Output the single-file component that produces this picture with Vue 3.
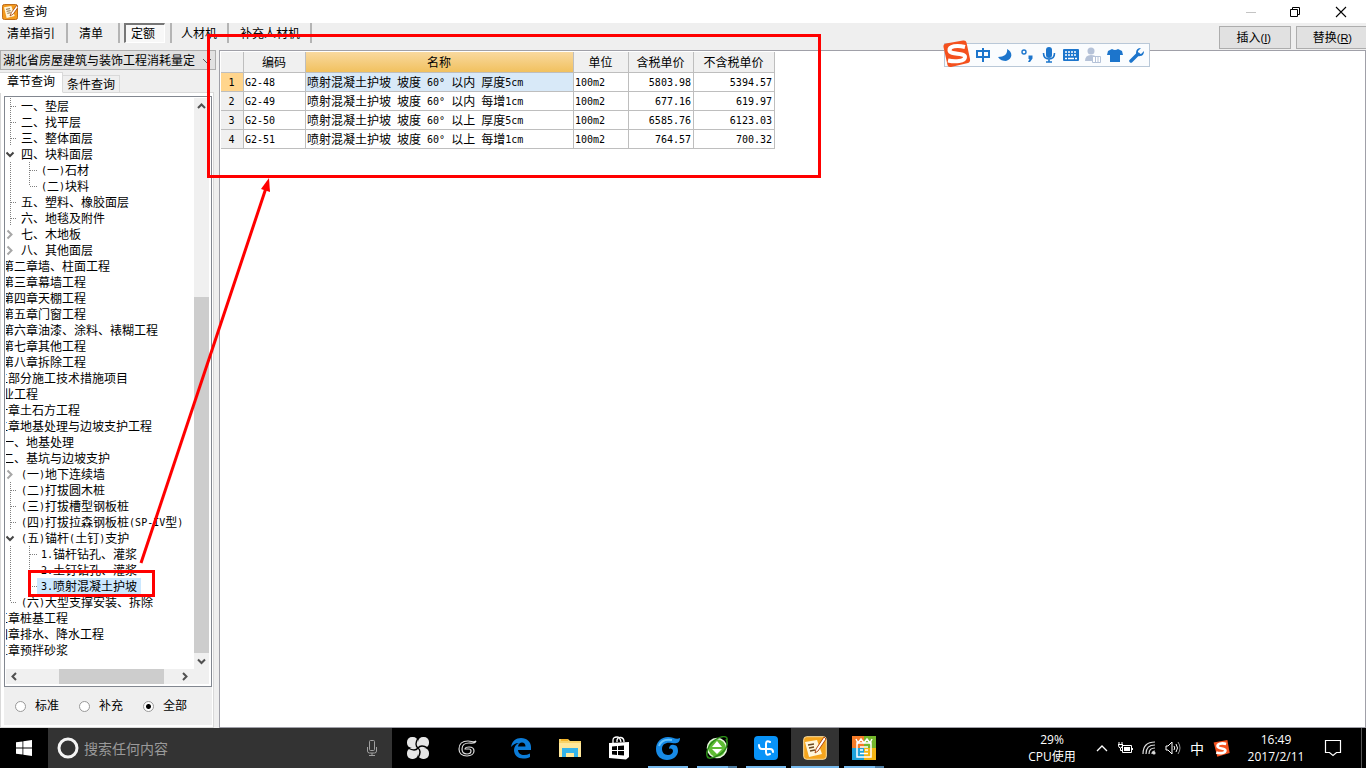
<script setup>
import { ref, h } from 'vue'

// Latin runs are set in a half-width face, so two of them fill one Chinese character.
const Mixed = (props) =>
  props.text
    .split(/([\x20-\x7e°]+)/)
    .filter(Boolean)
    .map((part) => (/^[\x20-\x7e°]/.test(part) ? h('span', { class: 'half' }, part) : part))
Mixed.props = ['text']

const modes = ['清单指引', '清单', '定额', '人材机', '补充人材机']
const activeMode = ref('定额')
const scope = ref('全部')
const selected = ref('3.喷射混凝土护坡')

const tree = [
  { t: '一、垫层', l: 'sec', a: 'mid' },
  { t: '二、找平层', l: 'sec', a: 'mid' },
  { t: '三、整体面层', l: 'sec', a: 'mid' },
  { t: '四、块料面层', l: 'sec', a: 'open' },
  { t: '(一)石材', l: 'sub', a: 'line', b: 'mid' },
  { t: '(二)块料', l: 'sub', a: 'line', b: 'end' },
  { t: '五、塑料、橡胶面层', l: 'sec', a: 'mid' },
  { t: '六、地毯及附件', l: 'sec', a: 'mid' },
  { t: '七、木地板', l: 'sec', a: 'shut' },
  { t: '八、其他面层', l: 'sec', a: 'shut' },
  { t: '第二章墙、柱面工程', l: 'chap' },
  { t: '第三章幕墙工程', l: 'chap' },
  { t: '第四章天棚工程', l: 'chap' },
  { t: '第五章门窗工程', l: 'chap' },
  { t: '第六章油漆、涂料、裱糊工程', l: 'chap' },
  { t: '第七章其他工程', l: 'chap' },
  { t: '第八章拆除工程', l: 'chap' },
  { t: '二部分施工技术措施项目', l: 'part' },
  { t: '业工程', l: 'chap' },
  { t: '一章土石方工程', l: 'part' },
  { t: '二章地基处理与边坡支护工程', l: 'part' },
  { t: '一、地基处理', l: 'chap' },
  { t: '二、基坑与边坡支护', l: 'chap' },
  { t: '(一)地下连续墙', l: 'sec', a: 'shut' },
  { t: '(二)打拔圆木桩', l: 'sec', a: 'mid' },
  { t: '(三)打拔槽型钢板桩', l: 'sec', a: 'mid' },
  { t: '(四)打拔拉森钢板桩(SP-IV型)', l: 'sec', a: 'mid' },
  { t: '(五)锚杆(土钉)支护', l: 'sec', a: 'open' },
  { t: '1.锚杆钻孔、灌浆', l: 'sub', a: 'line', b: 'mid' },
  { t: '2.土钉钻孔、灌浆', l: 'sub', a: 'line', b: 'mid' },
  { t: '3.喷射混凝土护坡', l: 'sub', a: 'line', b: 'end' },
  { t: '(六)大型支撑安装、拆除', l: 'sec', a: 'end' },
  { t: '三章桩基工程', l: 'part' },
  { t: '四章排水、降水工程', l: 'part' },
  { t: '五章预拌砂浆', l: 'part' },
]

const rows = [
  ['G2-48', '喷射混凝土护坡 坡度 60° 以内 厚度5cm', '100m2', '5803.98', '5394.57'],
  ['G2-49', '喷射混凝土护坡 坡度 60° 以内 每增1cm', '100m2', '677.16', '619.97'],
  ['G2-50', '喷射混凝土护坡 坡度 60° 以上 厚度5cm', '100m2', '6585.76', '6123.03'],
  ['G2-51', '喷射混凝土护坡 坡度 60° 以上 每增1cm', '100m2', '764.57', '700.32'],
]
</script>

<template>
  <div class="screen">
    <header class="title">
      <svg class="app-icon" width="16" height="16" viewBox="0 0 24 24">
        <rect x=".7" y=".7" width="22.6" height="22.6" rx="3" fill="#f39a1d" stroke="#b9620c" stroke-width="1.4" />
        <path d="M3 5l11-2 5 15-12 3z" fill="#fff6dc" />
        <path d="M6 8l6-1M7 11l6-1M8 14l5-1" stroke="#6b4a22" stroke-width="1.2" />
        <path d="M22 2l-8 11-2 5 5-3 7-10z" fill="#fff" stroke="#a5420a" stroke-width="1.2" />
      </svg>
      <h1>查询</h1>
      <div class="win-btns">
        <button aria-label="最小化"><svg width="12" height="12"><path d="M1 6.500h10" stroke="#c4c4c4" /></svg></button>
        <button aria-label="还原"><svg width="12" height="12" fill="none" stroke="#000"><path d="M1.500 3.500h7v7h-7zM3.500 3.500v-2h7v7h-2" /></svg></button>
        <button aria-label="关闭"><svg width="12" height="12" fill="none" stroke="#000" stroke-width="1.100"><path d="M1 1l10 10M11 1L1 11" /></svg></button>
      </div>
    </header>

    <nav class="modes">
      <div v-for="m in modes" :key="m" class="mode-cell">
        <button :class="{ on: m === activeMode }" @click="activeMode = m">{{ m }}</button>
      </div>
      <div class="actions">
        <button>插入<span class="key">(<u>I</u>)</span></button>
        <button>替换<span class="key">(<u>R</u>)</span></button>
      </div>
    </nav>

    <main>
      <aside>
        <div class="combo">
          <select aria-label="定额库"><option>湖北省房屋建筑与装饰工程消耗量定</option></select>
          <svg width="10" height="6" fill="none" stroke="#555"><path d="M1 1l4 4 4-4" /></svg>
        </div>
        <div class="tabs">
          <button class="on">章节查询</button>
          <button>条件查询</button>
        </div>
        <section class="page">
          <div class="treebox">
            <ul class="tree">
              <li v-for="n in tree" :key="n.t" :class="n.l">
                <svg v-if="n.a" :width="n.b ? 51 : 31" height="16" fill="none" stroke="#808080" stroke-dasharray="1 1">
                  <path v-if="n.a === 'mid' || n.a === 'line'" d="M24.500 0v16" />
                  <path v-if="n.a === 'end'" d="M24.500 0v8" />
                  <path v-if="n.a === 'mid' || n.a === 'end'" d="M25 8.500h8" />
                  <path v-if="n.a === 'open' || n.a === 'shut'" d="M32 8.500h1" />
                  <path v-if="n.a === 'open'" d="M20.500 6.500l3.500 3.500 3.500-3.500" stroke="#444" stroke-width="2" stroke-dasharray="none" />
                  <path v-if="n.a === 'shut'" d="M21.500 4.500l4 4-4 4" stroke="#a6a6a6" stroke-width="2" stroke-dasharray="none" />
                  <path v-if="n.b === 'mid'" d="M43.500 0v16" />
                  <path v-if="n.b === 'end'" d="M43.500 0v8" />
                  <path v-if="n.b" d="M44 8.500h7" />
                </svg>
                <button :class="{ sel: n.t === selected }" @click="selected = n.t"><Mixed :text="n.t" /></button>
              </li>
            </ul>
            <div class="vbar">
              <svg width="15" height="16" fill="none" stroke="#505050" stroke-width="2"><path d="M4 10l3.500-3.500L11 10" /></svg>
              <i class="before"></i><i class="thumb"></i>
              <svg width="15" height="16" fill="none" stroke="#505050" stroke-width="2"><path d="M4 6.500l3.500 3.500L11 6.500" /></svg>
            </div>
            <div class="hbar">
              <svg width="16" height="15" fill="none" stroke="#505050" stroke-width="2"><path d="M10 4L6.500 7.500 10 11" /></svg>
              <i class="before"></i><i class="thumb"></i><i class="after"></i>
              <svg width="16" height="15" fill="none" stroke="#505050" stroke-width="2"><path d="M5 4l3.500 3.500L5 11" /></svg>
            </div>
            <div class="corner"></div>
          </div>
          <div class="scopes">
            <label v-for="s in ['标准', '补充', '全部']" :key="s"><input v-model="scope" type="radio" name="scope" :value="s" />{{ s }}</label>
          </div>
        </section>
      </aside>

      <section class="grid">
        <table>
          <colgroup><col class="c0" /><col class="c1" /><col class="c2" /><col class="c3" /><col class="c4" /><col class="c5" /></colgroup>
          <thead>
            <tr><th></th><th>编码</th><th class="hot">名称</th><th>单位</th><th>含税单价</th><th>不含税单价</th></tr>
          </thead>
          <tbody>
            <tr v-for="(r, i) in rows" :key="r[0]" :class="{ cur: i === 0 }">
              <th scope="row"><Mixed :text="String(i + 1)" /></th>
              <td v-for="(c, j) in r" :key="j" :class="{ num: j > 2, name: j === 1 }"><Mixed :text="c" /></td>
            </tr>
          </tbody>
        </table>
      </section>
    </main>

    <footer class="taskbar">
      <button class="start" aria-label="开始">
        <svg width="16" height="16" fill="#fff"><path d="M0 2.300l6.500-.9v6.200H0zM7.300 1.300L16 0v7.600H7.300zM0 8.400h6.500v6.200L0 13.700zM7.300 8.400H16V16l-8.700-1.300z" /></svg>
      </button>
      <label class="search">
        <svg width="22" height="22" fill="none" stroke="#f4f4f4"><circle cx="11" cy="11" r="9" stroke-width="3" /></svg>
        <input type="text" placeholder="搜索任何内容" aria-label="搜索" />
        <svg width="12" height="18" fill="none" stroke="#a0a0a0"><rect x="3.500" y="1.500" width="5" height="10" rx="1" /><path d="M1.500 8v4q0 2 2 2h5q2 0 2-2V8M6 14v3M3 16.500h6" /></svg>
      </label>
      <div class="apps">
        <button aria-label="搜狗">
          <svg width="22" height="22">
            <g fill="#e6e6e6"><rect x="0" y="0" width="11" height="11" rx="5" /><rect x="11" y="0" width="11" height="11" rx="5" /><rect x="11" y="11" width="11" height="11" rx="5" /><rect x="0" y="11" width="11" height="11" rx="5" /><circle cx="11" cy="11" r="5" /></g>
            <path d="M11 11Q7 8 11 1M11 11Q14 7 21 11M11 11Q15 14 11 21M11 11Q8 15 1 11" fill="none" stroke="#000" stroke-width="1.400" />
          </svg>
        </button>
        <button aria-label="广联达">
          <svg width="20" height="20" fill="none" stroke="#e0e0e0" stroke-width="1.200"><path d="M19 3c-2 2-4 0-8 0C5 3 2 6 2 11c0 4 3 7 8 7 4 0 7-2 7-5s-2-4-5-4c-2 0-4 1-4 2h4c2 0 2 1 2 2 0 2-2 3-4 3-3 0-5-2-5-5 0-4 3-6 7-6 3 0 6 1 7-2z" /></svg>
        </button>
        <span class="gap"></span>
        <button aria-label="Edge">
          <svg width="22" height="22" viewBox="0 0 22 22" fill="#0c7cd8"><path d="M1 10C2 4 6 1 11 1c6 0 10 4 10 9v3H8c0 3 3 5 6 5 2 0 4-.5 6-1.500V20c-2 1-4 1.500-7 1.500C8 21.500 4 18 4 13c0-3 2-6 5-7-4 0-6 2-8 4zm7-.5h7.500C15.500 7 14 5.500 12 5.500S8.500 7 8 9.500z" /></svg>
        </button>
        <button aria-label="文件资源管理器">
          <svg width="22" height="20"><path d="M0 1h9l2 2h11v16H0z" fill="#f8d36a" /><path d="M2 1h7v2H2z" fill="#f4b42a" /><path d="M0 5h22v14H0z" fill="#ffe79b" /><path d="M3 19v-9h16v9h-4v-4H7v4z" fill="#34b3ea" /></svg>
        </button>
        <button aria-label="应用商店">
          <svg width="22" height="24"><path d="M1 7l20-1v15l-3 2.500L1 22z" fill="#fff" /><path d="M5 7V4q0-3 4-3 3 0 4 5M9 6V4q1-3 4-2.500 3 .5 3 4.500" fill="none" stroke="#fff" stroke-width="1.300" /><path d="M4 10.500l5-.4v4H4zM10 10l6-.5v4.600h-6zM4 15h5v4l-5-.4zM10 15h6v4.600l-6-.5z" fill="#000" /></svg>
        </button>
        <button class="run" aria-label="广联达助手">
          <svg width="24" height="24" fill="none">
            <path d="M24 2c0 5-4 6-8 5-6-1-10 1-10 6 0 3 2 6 6 6 3 0 5-2 5-4s-2-3-4-2c0-3 2-5 5-4 3 0 4 3 4 6 0 5-5 9-11 9C5 24 0 20 0 13 0 6 5 1 12 1c5 0 8 3 12 1z" fill="#178ae6" />
            <path d="M3 10c2-6 7-7 13-6" stroke="#66c2fb" stroke-width="2" />
          </svg>
        </button>
        <button class="run many" aria-label="浏览器">
          <svg width="24" height="24"><circle cx="12" cy="12" r="9.500" fill="#5fbc35" stroke="#e9f9df" stroke-width="1.600" /><path d="M12 5l5 6H7zM7 13h10l-5 5z" fill="#fff" /><path d="M3 22C0 18 3 9 10 4s13-4 12 0M21 3c3 5 0 12-7 16S2 23 3 20" fill="none" stroke="#2c8d18" stroke-width="1.500" /></svg>
        </button>
        <button class="run" aria-label="计价">
          <svg width="24" height="24"><rect width="24" height="24" rx="4" fill="#0893f8" /><path d="M16 6q-4-2-4 2v8q0 4 4 2M5 9q0 4 3 4h8q3 0 3 3" fill="none" stroke="#fff" stroke-width="2" stroke-linecap="round" /></svg>
        </button>
        <button class="run now" aria-label="查询">
          <svg width="24" height="24"><rect x=".7" y=".7" width="22.600" height="22.600" rx="3" fill="#f5a51e" stroke="#ffe0a0" /><path d="M2 6l12-2 5 14-13 3z" fill="#fff6dc" /><path d="M5 9l6-1M6 12l5-1M7 15l5-1" stroke="#6b4a22" stroke-width="1.400" /><path d="M21 1l-8 12-1 4 3-2 8-12z" fill="#fff" stroke="#b34a10" /></svg>
        </button>
        <button class="run many" aria-label="文档工具">
          <svg width="24" height="24"><path d="M0 0h12v12H0z" fill="#f57b28" /><path d="M12 0h12v12H12z" fill="#74b72c" /><path d="M0 12h12v12H0z" fill="#1ea3da" /><path d="M12 12h12v12H12z" fill="#f3b414" /><path d="M4 3l2 4 3-4 3 4 3-4 3 4 2-4M5 7v14h14V7z" fill="none" stroke="#fff" stroke-width="1.500" /><path d="M8 11h8M8 14h3M13 14h3M8 17.500h8" stroke="#fff" stroke-width="1.600" /></svg>
        </button>
      </div>
      <div class="cpu">29%<br />CPU使用</div>
      <div class="tray">
        <svg width="12" height="8" fill="none" stroke="#fff" stroke-width="1.300"><path d="M1 7l5-5 5 5" /></svg>
        <svg width="16" height="14" fill="none" stroke="#fff"><path d="M5.500 4.500h9v7h-9zM15.500 7v2M1 3.500h5M2 1v2M5 1v2M1.500 4q0 3 2 3t2-3M3.500 7v2.500H5" /><path d="M7 6h6v4H7z" fill="#fff" stroke="none" /></svg>
        <svg width="14" height="14" fill="none" stroke="#ddd" stroke-width="1.200"><path d="M1 13Q1 1 13 1M4 13q0-9 9-9M7 13q0-6 6-6M10 13q0-3 3-3" /><circle cx="12" cy="12" r="1" fill="#fff" /></svg>
        <svg width="16" height="14" fill="none" stroke="#fff"><path d="M1 5h2l4-4v12L3 9H1zM9 5q1.500 2 0 4M11 3q3 4 0 8" /><path d="M13 1q4 6 0 12" stroke="#999" /></svg>
        <span class="ime">中</span>
        <svg width="17" height="17" viewBox="0 0 26 26"><path d="M1 4l21-4 3.500 20-19 5.500z" fill="#f4511e" /><path d="M20 6C13 4 6 6 7 10s12 2 12 6-8 5-14 3" fill="none" stroke="#fff" stroke-width="4" /></svg>
      </div>
      <div class="clock">16:49<br />2017/2/11</div>
      <svg class="note" width="18" height="18" fill="none" stroke="#fff" stroke-width="1.200"><path d="M1.500 1.500h15v12h-4l-3.500 3-3.500-3h-4z" /></svg>
      <i class="peek"></i>
    </footer>

    <div class="sogou">
      <svg class="logo" width="28" height="28" viewBox="0 0 28 28"><path d="M3 3.500L20 .5q3-.5 3.500 2L27 19q.5 3-2 4L8 27q-3 .5-3.500-2L.5 7q-.500-3 2.500-3.500z" fill="#f4511e" /><path d="M22 7C14 5 6 6 6.500 10.500S22 12.500 22 17 12 22 5 20.500" fill="none" stroke="#fff" stroke-width="4" /></svg>
      <svg width="16" height="16" fill="none" stroke="#1c75cc" stroke-width="2"><path d="M2 4h12v6H2zM8 1v14" /></svg>
      <svg width="16" height="16" fill="#1c75cc"><path d="M10 2c1 5-3 8-9 8 2 3 5 4 8 4 7-2 7-9 1-12z" /></svg>
      <svg width="16" height="16" fill="#1c75cc"><circle cx="5" cy="5" r="2" fill="none" stroke="#1c75cc" stroke-width="1.400" /><path d="M9.500 8.500h4v3L11 15H9l1.500-3h-1z" /></svg>
      <svg width="16" height="16"><rect x="5" y="0" width="6" height="11" rx="3" fill="#1c75cc" /><path d="M2.500 6q0 6 5.500 6t5.500-6M8 12v3.500M5 15h6" fill="none" stroke="#1c75cc" stroke-width="1.600" /></svg>
      <svg width="16" height="16"><rect y="2" width="16" height="12" rx="1" fill="#1c75cc" /><path d="M2 5h12M2 8h12" stroke="#fff" stroke-width="1.500" stroke-dasharray="2 1" /><path d="M2 11.500h2M5 11.500h6M12 11.500h2" stroke="#fff" stroke-width="1.500" /></svg>
      <svg width="16" height="16" fill="#b5c2d8"><circle cx="6" cy="4" r="3.500" /><path d="M0 14q0-6 6-6 4 0 5 2H7v4z" /><path d="M7.500 9.500h8v6h-8zM10.500 9.500v6M13 9.500v6" fill="#fff" stroke="#b5c2d8" /></svg>
      <svg width="16" height="16" fill="#1c75cc"><path d="M5 2q3 2 6 0l4 2 1 4h-3v7H3V8H0l1-4z" /></svg>
      <svg width="16" height="16"><path d="M2 14l7-7" stroke="#1c75cc" stroke-width="3.500" stroke-linecap="round" /><path d="M12 1q-5 0-5 5 1 4 4 3 4 0 4-5l-3 3-3-1V4z" fill="#1c75cc" /></svg>
    </div>

    <div class="mark big"></div>
    <div class="mark small"></div>
    <svg class="arrow" width="150" height="400"><path d="M11 387L136 12" stroke="#f00" stroke-width="3" fill="none" /><path d="M139 2l1 14-9-3z" fill="#f00" /></svg>
  </div>
</template>

<style>
html, body { margin: 0; background: #efefef; overflow: hidden; }
.half { font: 10px "DejaVu Sans Mono", monospace; line-height: 1; white-space: pre; vertical-align: 1px; }
</style>

<style scoped>
* { box-sizing: border-box; }
.screen { position: relative; min-height: 100vh; display: flex; flex-direction: column; background: #efefef; color: #000; font: 12px/16px "Liberation Sans", "Noto Sans CJK SC", sans-serif; }
button { font: inherit; color: inherit; border: 0; background: none; padding: 0; margin: 0; white-space: nowrap; }
svg { flex: none; display: block; }
.title { display: flex; align-items: center; height: 23px; background: #fff; padding-left: 2px; }
h1 { margin: 0 auto 0 5px; font-size: 12px; font-weight: 400; }
.win-btns { display: flex; height: 20px; }
.win-btns button { width: 46px; display: flex; align-items: center; justify-content: center; }
.win-btns button:nth-child(2) { padding-right: 4px; }
.win-btns button:last-child { padding-right: 4px; }
.modes { display: flex; height: 27px; align-items: flex-start; }
.mode-cell { height: 20px; display: flex; padding: 0 6px; border-right: 2px solid #b4b4b4; }
.mode-cell:first-child { padding-left: 2px; }
.mode-cell:nth-child(3) { padding: 0 5px 0 4px; }
.mode-cell:nth-child(4) { padding: 0 5px 0 4px; }
.mode-cell:nth-child(5) { padding-right: 5px; }
.mode-cell button { height: 20px; padding: 2px 5px 0; }
.mode-cell:nth-child(2) button { padding-right: 9px; }
.mode-cell button.on { background: #f8f8f8; border: 1px solid #fff; border-top: 2px solid #777; border-left: 2px solid #777; padding: 1px 9px 0 5px; }
.actions { margin-left: auto; margin-right: -5px; display: flex; gap: 5px; padding-top: 3px; }
.actions button { height: 23px; padding: 0 18px 0 16px; min-width: 72px; background: #e1e1e1; border: 1px solid #adadad; }
.key { font-size: 11px; }
main { flex: 1; display: flex; gap: 3px; min-height: 0; }
aside { flex: none; width: 216px; display: flex; flex-direction: column; }
.combo { position: relative; height: 20px; }
.combo select { appearance: none; width: 100%; height: 20px; font: inherit; color: #000; padding: 2px 0 0 2px; background: #e1e1e1; border: 1px solid #adadad; border-radius: 0; }
.combo svg { position: absolute; right: 4px; top: 8px; }
.tabs { display: flex; align-items: flex-end; height: 23px; padding-top: 2px; margin-bottom: -1px; position: relative; }
.tabs button { height: 18px; padding: 1px 4px 0; border: 1px solid #d9d9d9; border-left: 0; border-bottom-color: #d9d9d9; }
.tabs button.on { height: 21px; padding: 0 7px 1px; background: #fff; border-bottom-color: #fff; }
.page { flex: 1; width: 214px; border: 1px solid #d9d9d9; background: #fff; padding: 3px 1px 2px 3px; display: flex; flex-direction: column; }
.treebox { flex: 1; border: 1px solid #828790; padding: 1px 2px 2px 1px; display: grid; grid-template-columns: 1fr 15px; grid-template-rows: 1fr 15px; }
.tree { list-style: none; margin: 0; padding: 0; overflow: hidden; min-width: 0; }
.tree li { display: flex; height: 16px; margin-left: -20px; }
.tree button { line-height: 14px; height: 16px; padding: 2px 4px 0; }
.tree .chap button { margin-left: 12px; }
.tree .part button { margin-left: 6px; }
.tree .sel { background: #cce8ff; }
.vbar { background: #f0f0f0; display: flex; flex-direction: column; }
.vbar .before { flex: 183; }
.vbar .thumb { flex: 355; background: #cdcdcd; }
.hbar { background: #f0f0f0; display: flex; }
.hbar .before { flex: 37; }
.hbar .thumb { flex: 105; background: #cdcdcd; }
.hbar .after { flex: 14; }
.corner { background: #f0f0f0; }
.scopes { height: 38px; background: #efefef; display: flex; align-items: center; gap: 20px; padding-left: 11px; }
.scopes label { display: flex; align-items: center; gap: 9px; }
.scopes input { appearance: none; width: 11px; height: 11px; margin: 0; border: 1px solid #999; border-radius: 50%; background: #fff; }
.scopes input:checked { background: radial-gradient(circle, #000 0 2px, #fff 3px); }
.grid { flex: 1; background: #fff; border: 1px solid #a0a0a8; padding: 1px; min-width: 0; }
table { border-spacing: 0; table-layout: fixed; width: 554px; }
.c0 { width: 23px; } .c1 { width: 62px; } .c2 { width: 268px; } .c3 { width: 55px; } .c4 { width: 65px; } .c5 { width: 81px; }
th, td { height: 19px; line-height: 16px; padding: 2px 2px 0 1px; border-right: 1px solid #bebebe; border-bottom: 1px solid #bebebe; font-weight: 400; text-align: left; white-space: nowrap; }
th { background: #f0f0f0; text-align: center; }
thead th { height: 21px; line-height: 18px; }
.hot { background: linear-gradient(#f9d99f, #f1c15f); }
.cur th { background: #ffd58d; }
.cur .name { background: #d8e9f8; }
.num { text-align: right; }
.taskbar { height: 40px; background: #000; color: #fff; display: flex; align-items: center; font: 12px/17px "Open Sans", "Noto Sans CJK SC", sans-serif; }
.start { width: 48px; height: 40px; display: flex; align-items: center; justify-content: center; }
.search { width: 344px; height: 40px; background: #333; display: flex; align-items: center; padding: 0 14px 0 9px; }
.search input { flex: 1; min-width: 0; background: none; border: 0; outline: 0; padding: 0 0 0 5px; color: #fff; font: 14px "Noto Sans CJK SC", sans-serif; }
.search input::placeholder { color: #9a9a9a; opacity: 1; }
.apps { display: flex; gap: 1px; padding-left: 2px; }
.apps .gap { width: 4px; }
.apps button { position: relative; width: 48px; height: 40px; display: flex; align-items: center; justify-content: center; }
.run::after { content: ""; position: absolute; left: 4px; right: 4px; bottom: 0; height: 2px; background: #76b9ed; }
.run.many::after { background: linear-gradient(90deg, #76b9ed 0 31px, #4d7ba0 31px); }
.now { background: #333; }
.run.now::after { left: 0; right: 0; }
.cpu { margin-left: auto; text-align: center; width: 60px; margin-right: 14px; }
.tray { display: flex; align-items: center; gap: 9px; }
.ime { font-size: 14px; }
.clock { text-align: center; width: 60px; margin: 0 18px 0 16px; }
.peek { width: 1px; height: 40px; background: #555; margin: 0 4px 0 19px; }
.sogou { position: absolute; left: 944px; top: 43px; width: 206px; height: 24px; background: #fafcfe; border: 1px solid #b9c8d8; display: flex; align-items: center; justify-content: space-between; padding: 0 4px 0 0; }
.logo { margin: -3px -2px 0 -2px; }
.mark { position: absolute; border: 3px solid #f00; pointer-events: none; }
.big { left: 207px; top: 34px; width: 614px; height: 144px; }
.small { left: 28px; top: 570px; width: 127px; height: 27px; }
.arrow { position: absolute; left: 130px; top: 176px; pointer-events: none; }
</style>
